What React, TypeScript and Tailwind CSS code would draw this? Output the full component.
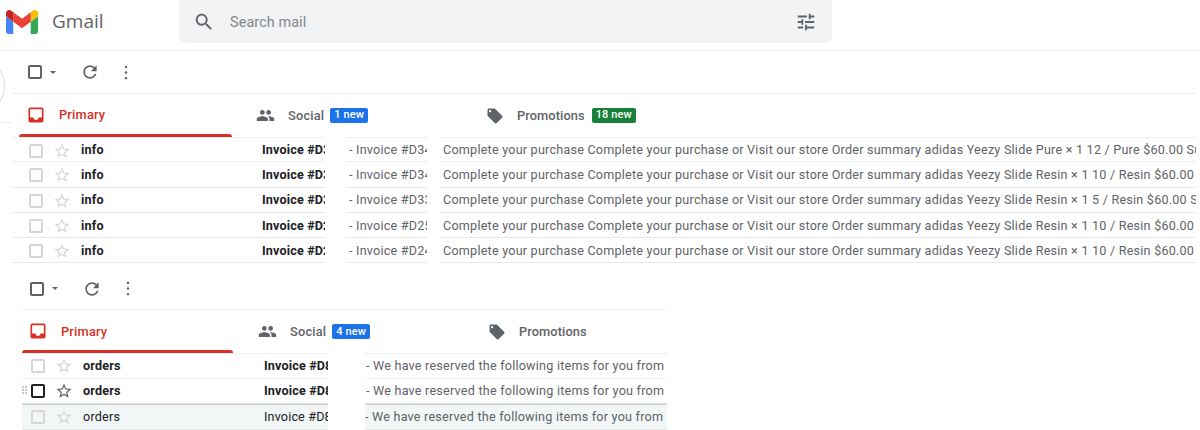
import type { ReactNode } from "react";

const paths = {
  search: "M15.5 14h-.79l-.28-.27C15.41 12.59 16 11.11 16 9.5 16 5.91 13.09 3 9.5 3S3 5.91 3 9.5 5.91 16 9.5 16c1.61 0 3.09-.59 4.23-1.57l.27.28v.79l5 4.99L20.49 19l-4.99-5zm-6 0C7.01 14 5 11.99 5 9.5S7.01 5 9.5 5 14 7.01 14 9.5 11.99 14 9.5 14z",
  tune: "M3 17v2h6v-2H3zM3 5v2h10V5H3zm10 16v-2h8v-2h-8v-2h-2v6h2zM7 9v2H3v2h4v2h2V9H7zm14 4v-2H11v2h10zm-6-4h2V7h4V5h-4V3h-2v6z",
  refresh: "M17.65 6.35C16.2 4.9 14.21 4 12 4c-4.42 0-7.99 3.58-7.99 8s3.57 8 7.99 8c3.73 0 6.84-2.55 7.73-6h-2.08c-.82 2.33-3.04 4-5.65 4-3.31 0-6-2.69-6-6s2.69-6 6-6c1.66 0 3.14.69 4.22 1.78L13 11h7V4l-2.35 2.35z",
  inbox: "M19 3H4.99c-1.11 0-1.98.89-1.98 2L3 19c0 1.1.88 2 1.99 2H19c1.1 0 2-.9 2-2V5c0-1.11-.9-2-2-2zm0 12h-4c0 1.66-1.35 3-3 3s-3-1.34-3-3H4.99V5H19v10z",
  people: "M16 11c1.66 0 2.99-1.34 2.99-3S17.66 5 16 5c-1.66 0-3 1.34-3 3s1.34 3 3 3zm-8 0c1.66 0 2.99-1.34 2.99-3S9.66 5 8 5C6.34 5 5 6.34 5 8s1.34 3 3 3zm0 2c-2.33 0-7 1.17-7 3.5V19h14v-2.5c0-2.33-4.67-3.5-7-3.5zm8 0c-.29 0-.62.02-.97.05 1.16.84 1.97 1.97 1.97 3.45V19h6v-2.5c0-2.33-4.67-3.5-7-3.5z",
  tag: "M21.41 11.58l-9-9C12.05 2.22 11.55 2 11 2H4c-1.1 0-2 .9-2 2v7c0 .55.22 1.05.59 1.42l9 9c.36.36.86.58 1.41.58.55 0 1.05-.22 1.41-.59l7-7c.37-.36.59-.86.59-1.41 0-.55-.23-1.06-.59-1.42zM5.5 7C4.67 7 4 6.33 4 5.5S4.67 4 5.5 4 7 4.67 7 5.5 6.33 7 5.5 7z",
  star: "M22 9.24l-7.19-.62L12 2 9.19 8.63 2 9.24l5.46 4.73L5.82 21 12 17.27 18.18 21l-1.63-7.03L22 9.24zM12 15.4l-3.76 2.27 1-4.28-3.32-2.88 4.38-.38L12 6.1l1.71 4.04 4.38.38-3.32 2.88 1 4.28L12 15.4z",
};

function Icon({ d, className }: { d: string; className: string }) {
  return (
    <svg viewBox="0 0 24 24" fill="currentColor" className={`shrink-0 ${className}`}>
      <path d={d} />
    </svg>
  );
}

function Logo() {
  return (
    <svg viewBox="52 42 88 66" className="h-[24px] w-[32px] shrink-0">
      <path fill="#4285f4" d="M58 108h14V74L52 59v43c0 3.32 2.69 6 6 6" />
      <path fill="#34a853" d="M120 108h14c3.32 0 6-2.69 6-6V59l-20 15" />
      <path fill="#fbbc04" d="M120 48v26l20-15v-8c0-7.42-8.47-11.65-14.4-7.2" />
      <path fill="#ea4335" d="M72 74V48l24 18 24-18v26L96 92" />
      <path fill="#c5221f" d="M52 51v8l20 15V48l-5.6-4.2c-5.94-4.45-14.4-.22-14.4 7.2" />
    </svg>
  );
}

function Header() {
  return (
    <div className="flex h-[51px] border-b border-[#eceef0]">
      <div className="flex w-[179px] items-center pb-[7px] pl-[6px]">
        <Logo />
        <span className="ml-[14px] font-['Open_Sans',sans-serif] text-[19px] text-[#5f6368]">Gmail</span>
      </div>
      <div className="flex h-[43px] w-[653px] items-center rounded-b-lg bg-[#f1f3f4] pl-[14px] pr-[15px]">
        <Icon d={paths.search} className="h-[22px] w-[22px] text-[#5f6368]" />
        <span className="ml-[15px] pt-[2px] text-[14.4px] tracking-[0.1px] text-[#80868b]">Search mail</span>
        <Icon d={paths.tune} className="ml-auto h-[22px] w-[22px] text-[#5f6368]" />
      </div>
    </div>
  );
}

function Toolbar({ className }: { className: string }) {
  return (
    <div className={`flex items-center border-b border-[#eceef0] ${className}`}>
      <div className="h-[14px] w-[14px] rounded-[2px] border-2 border-[#5f6368]" />
      <div className="ml-[8px] h-0 w-0 border-x-[3.5px] border-t-[3.5px] border-x-transparent border-t-[#5f6368]" />
      <Icon d={paths.refresh} className="ml-[24px] h-[20px] w-[20px] text-[#5f6368]" />
      <svg viewBox="0 0 4 16" className="ml-[24px] h-[15px] w-[4px] text-[#5f6368]" fill="currentColor">
        <circle cx="2" cy="2" r="1.3" />
        <circle cx="2" cy="8" r="1.3" />
        <circle cx="2" cy="14" r="1.3" />
      </svg>
    </div>
  );
}

function Badge({ color, children }: { color: string; children: ReactNode }) {
  return (
    <span className={`flex h-[15px] items-center rounded-[2px] px-[4px] text-[11px] font-medium tracking-[0.1px] text-white ${color}`}>
      {children}
    </span>
  );
}

function Tabs({ firstTab, bar, social, badgeSocial, badgePromo }: {
  firstTab: string;
  bar: string;
  social: string;
  badgeSocial: string;
  badgePromo?: string;
}) {
  return (
    <div className="flex h-[43px] text-[12.8px] font-medium tracking-[0.2px]">
      <div className={`flex flex-col ${firstTab}`}>
        <div className="flex flex-1 items-center pt-[2px] text-[#d93025]">
          <Icon d={paths.inbox} className="h-[20px] w-[20px]" />
          <span className="ml-[13px]">Primary</span>
        </div>
        <div className={`h-[3px] rounded-t-[3px] bg-[#d93025] ${bar}`} />
      </div>
      <div className={`flex items-center text-[#5f6368] ${social}`}>
        <Icon d={paths.people} className="h-[19px] w-[19px]" />
        <span className="ml-[13px] mr-[6px]">Social</span>
        <Badge color="bg-[#1a73e8]">{badgeSocial}</Badge>
      </div>
      <div className="flex flex-1 items-center text-[#5f6368]">
        <Icon d={paths.tag} className="h-[18px] w-[18px]" />
        <span className="ml-[13px] mr-[7px] tracking-[0.1px]">Promotions</span>
        {badgePromo && <Badge color="bg-[#188038]">{badgePromo}</Badge>}
      </div>
    </div>
  );
}

type RowProps = {
  sender: string;
  subject: string;
  first?: boolean;
  pad: string;
  width: string;
  height: string;
  read?: boolean;
  hovered?: boolean;
  children: ReactNode;
};

function Row({ sender, subject, first, pad, width, height, read, hovered, children }: RowProps) {
  const line = first ? "border-y border-[#eceef0]" : "border-b border-[#e6e8ea]";
  return (
    <div className={`flex text-[12.6px] ${height}`}>
      <div className={`relative flex shrink-0 items-center overflow-hidden ${pad} ${width} ${read ? "border-y border-b-[#e6e8ea] border-t-[#c9cdcf] bg-[#f2f6f6]" : line}`}>
        {hovered && (
          <div className="absolute left-[0px] top-[7px] grid grid-cols-2 gap-[1px]">
            {[0, 1, 2, 3, 4, 5].map((i) => (
              <span key={i} className="h-[2px] w-[2px] bg-[#c4c7c9]" />
            ))}
          </div>
        )}
        <div className={`h-[14px] w-[14px] shrink-0 rounded-[2px] border-2 ${hovered ? "border-[#202124]" : "border-[#d6d6d6]"}`} />
        <Icon d={paths.star} className={`ml-[10px] h-[18px] w-[18px] ${hovered ? "text-[#5f6368]" : "text-[#d6d6d6]"}`} />
        <span className={`ml-[10px] w-[181px] shrink-0 tracking-[0.2px] text-[#202124] ${read ? "" : "font-bold"}`}>{sender}</span>
        <span className={`whitespace-nowrap tracking-[0.15px] text-[#202124] ${read ? "" : "font-bold"}`}>{subject}</span>
      </div>
      {children}
    </div>
  );
}

function Cell({ className, children }: { className: string; children: ReactNode }) {
  return (
    <div className={`flex items-center overflow-hidden whitespace-nowrap tracking-[0.22px] text-[#5f6368] ${className}`}>
      {children}
    </div>
  );
}

const preview = "Complete your purchase Complete your purchase or Visit our store Order summary adidas Yeezy Slide ";

const infoRows = [
  { code: "#D34", tail: "Pure × 1 12 / Pure $60.00 Subtotal" },
  { code: "#D34", tail: "Resin × 1 10 / Resin $60.00" },
  { code: "#D33", tail: "Resin × 1 5 / Resin $60.00 Subtotal" },
  { code: "#D25", tail: "Resin × 1 10 / Resin $60.00" },
  { code: "#D24", tail: "Resin × 1 10 / Resin $60.00" },
];

const orderRows = [
  { hovered: false, read: false },
  { hovered: true, read: false },
  { hovered: false, read: true },
];

export default function App() {
  return (
    <div className="relative h-[430px] w-[1200px] overflow-hidden bg-white font-['Roboto',sans-serif]">
      <Header />

      {/* piece of the compose button sticking out on the left */}
      <div className="absolute left-[-55px] top-[56px] h-[60px] w-[60px] rounded-full border border-[#dadce0]" />
      <div className="absolute left-0 top-[122px] h-px w-[12px] bg-[#eeeeee]" />

      <div className="ml-[12px] w-[1184px]">
        <Toolbar className="h-[43px] pl-[16px]" />
        <Tabs firstTab="w-[244px] pl-[14px]" bar="ml-[-7px] w-[213px]" social="w-[230px]" badgeSocial="1 new" badgePromo="18 new" />
        <div>
          {infoRows.map((row, i) => (
            <Row key={i} first={i === 0} sender="info" subject={`Invoice ${row.code}`} pad="pl-[17px] pt-[2px]" width="w-[313px]" height="h-[25.3px]">
              <Cell className={`ml-[21px] w-[81px] pl-[3px] pt-[2px] ${i === 0 ? "border-y border-[#eceef0]" : "border-b border-[#e6e8ea]"}`}>- Invoice {row.code}</Cell>
              <Cell className={`ml-[13px] w-[756px] pl-[3px] pt-[2px] ${i === 0 ? "border-y border-[#eceef0]" : "border-b border-[#e6e8ea]"}`}>{preview + row.tail}</Cell>
            </Row>
          ))}
        </div>
      </div>

      <div className="ml-[22px] mt-[5px] w-[645px]">
        <Toolbar className="h-[42px] pl-[8px]" />
        <Tabs firstTab="w-[236px] pl-[6px]" bar="ml-[-6px] w-[211px]" social="w-[230px]" badgeSocial="4 new" />
        <div>
          {orderRows.map((row, i) => (
            <Row key={i} first={i === 0} sender="orders" subject="Invoice #D8" pad="pl-[9px]" width="w-[306px]" height="h-[25.5px]" read={row.read} hovered={row.hovered}>
              <Cell className={`ml-[37px] w-[302px] ${row.read ? "border-y border-b-[#e6e8ea] border-t-[#c9cdcf] bg-[#f2f6f6]" : i === 0 ? "border-y border-[#eceef0] pl-[1px]" : "border-b border-[#e6e8ea] pl-[1px]"}`}>
                - We have reserved the following items for you from
              </Cell>
            </Row>
          ))}
        </div>
      </div>
    </div>
  );
}
